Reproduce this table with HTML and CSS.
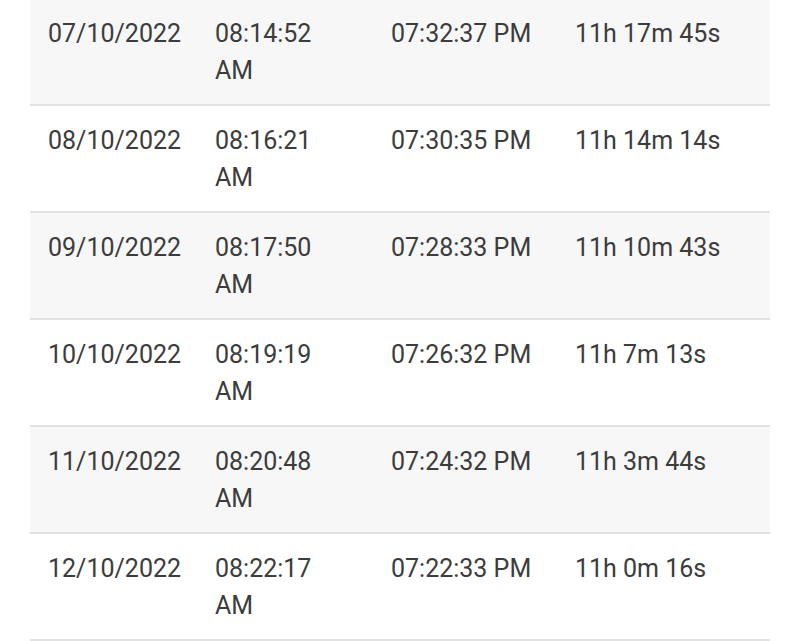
FILE: index.html
```html
<!DOCTYPE html>
<html>
<head>
<meta charset="utf-8">
<link rel="stylesheet" href="styles.css">
</head>
<body>
<div class="page">
<table class="sun-table">
<colgroup>
<col class="c1"><col class="c2"><col class="c3"><col class="c4">
</colgroup>
<tbody>
<tr class="odd"><td>07/10/2022</td><td>08:14:52 AM</td><td>07:32:37 PM</td><td>11h 17m 45s</td></tr>
<tr><td>08/10/2022</td><td>08:16:21 AM</td><td>07:30:35 PM</td><td>11h 14m 14s</td></tr>
<tr class="odd"><td>09/10/2022</td><td>08:17:50 AM</td><td>07:28:33 PM</td><td>11h 10m 43s</td></tr>
<tr><td>10/10/2022</td><td>08:19:19 AM</td><td>07:26:32 PM</td><td>11h 7m 13s</td></tr>
<tr class="odd"><td>11/10/2022</td><td>08:20:48 AM</td><td>07:24:32 PM</td><td>11h 3m 44s</td></tr>
<tr><td>12/10/2022</td><td>08:22:17 AM</td><td>07:22:33 PM</td><td>11h 0m 16s</td></tr>
</tbody>
</table>
</div>
</body>
</html>
```
FILE: styles.css
```css
html, body {
  margin: 0;
  padding: 0;
  background: #ffffff;
}
.page {
  padding: 0 30px;
  overflow: hidden;
  height: 641px;
}
.sun-table {
  width: 740px;
  margin-top: -1px;
  border-collapse: collapse;
  table-layout: fixed;
  font-family: Roboto, "Noto Sans", sans-serif;
  font-size: 25px;
  line-height: 37px;
  color: #3c3c3c;
}
.c1 { width: 167px; }
.c2 { width: 176px; }
.c3 { width: 184px; }
.c4 { width: 213px; }
.sun-table td {
  padding: 16px 18px 15px 18px;
  vertical-align: top;
  border-bottom: 2px solid #e2e2e2;
  height: 74px;
  box-sizing: content-box;
}
.sun-table tr.odd td {
  background: #f7f7f7;
}
```
